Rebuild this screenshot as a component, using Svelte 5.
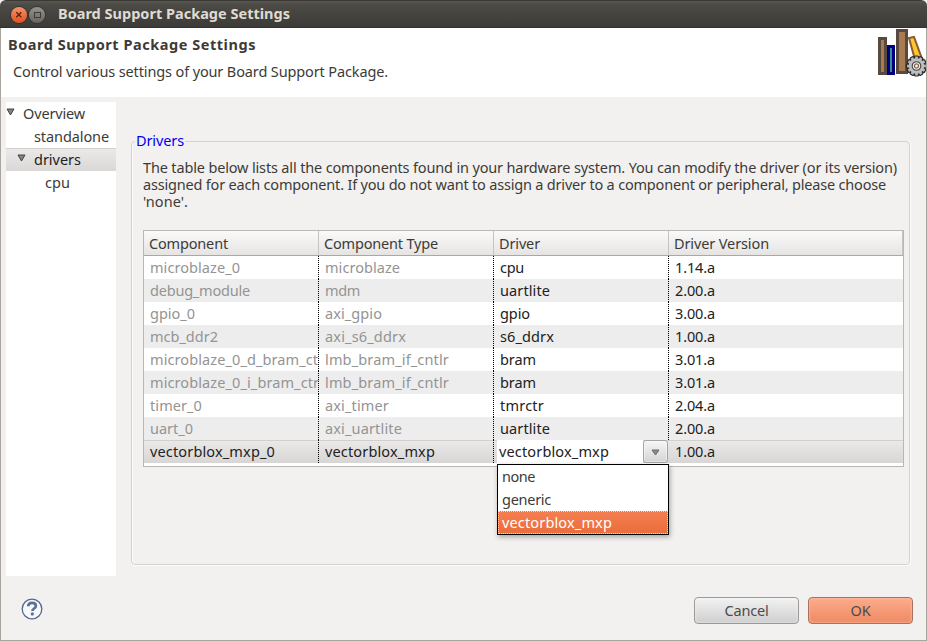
<script>
  // Spreads the letters of a label so that it takes up the given width.
  function fit(node, width) {
    const range = document.createRange();
    range.selectNodeContents(node);
    const natural = range.getBoundingClientRect().width;
    node.style.letterSpacing = `${(width - natural) / node.textContent.length}px`;
  }

  const tree = [
    { label: 'Overview', width: 62, level: 0, open: true },
    { label: 'standalone', width: 75, level: 1 },
    { label: 'drivers', width: 47, level: 1, open: true, selected: true },
    { label: 'cpu', width: 25, level: 2 }
  ];

  const description = [
    ['The table below lists all the components found in your hardware system. You can modify the driver (or its version)', 754],
    ['assigned for each component. If you do not want to assign a driver to a component or peripheral, please choose', 743],
    ["'none'.", 45]
  ];

  const columns = [
    ['Component', 79],
    ['Component Type', 114],
    ['Driver', 41],
    ['Driver Version', 95]
  ];

  const rows = [
    [['microblaze_0', 90], ['microblaze', 75], ['cpu', 24], ['1.14.a', 40]],
    [['debug_module', 100], ['mdm', 35], ['uartlite', 50], ['2.00.a', 40]],
    [['gpio_0', 45], ['axi_gpio', 57], ['gpio', 30], ['3.00.a', 40]],
    [['mcb_ddr2', 68], ['axi_s6_ddrx', 81], ['s6_ddrx', 54], ['1.00.a', 40]],
    [['microblaze_0_d_bram_ctrl', 178], ['lmb_bram_if_cntlr', 124], ['bram', 36], ['3.01.a', 40]],
    [['microblaze_0_i_bram_ctrl', 173], ['lmb_bram_if_cntlr', 124], ['bram', 36], ['3.01.a', 40]],
    [['timer_0', 52], ['axi_timer', 64], ['tmrctr', 44], ['2.04.a', 40]],
    [['uart_0', 43], ['axi_uartlite', 77], ['uartlite', 50], ['2.00.a', 40]],
    [['vectorblox_mxp_0', 125], ['vectorblox_mxp', 110], ['vectorblox_mxp', 110], ['1.00.a', 40]]
  ];

  const options = [
    ['none', 33],
    ['generic', 49],
    ['vectorblox_mxp', 110]
  ];

  const teeth = Array.from({ length: 12 }, (_, i) => i * 30);
</script>

<div class="window">
  <header class="titlebar">
    <span class="orb close">
      <svg width="16" height="16" viewBox="0 0 16 16"><path d="M5.3 5.3l5 5M10.3 5.3l-5 5" stroke="#542210" stroke-width="1.3" /></svg>
    </span>
    <span class="orb max">
      <svg width="16" height="16" viewBox="0 0 16 16"><rect x="5.5" y="5.5" width="6" height="5" fill="none" stroke="#3b3a36" /></svg>
    </span>
    <span class="title" use:fit={232}>Board Support Package Settings</span>
  </header>

  <div class="body">
    <section class="banner">
      <div class="headings">
        <h1><span use:fit={248}>Board Support Package Settings</span></h1>
        <p><span use:fit={375}>Control various settings of your Board Support Package.</span></p>
      </div>
      <svg class="books" width="48" height="49" viewBox="0 0 48 49">
        <path d="M31 10l5-1 11 30h-8z" fill="#ffc62f" stroke="#8a5d36" stroke-width="2" />
        <path d="M1.5 10.5h6v35h-6z" fill="#a87c50" stroke="#594a40" stroke-width="3" />
        <path d="M10.5 18.5h5v27h-5z" fill="#388c9f" stroke="#00007c" stroke-width="3" />
        <path d="M19.5 2.5h9v42h-9z" fill="#a87c50" stroke="#594a40" stroke-width="3" />
        <g transform="translate(38.5 38)">
          {#each teeth as angle}
            <rect x="-2" y="-10" width="4" height="5" rx="1" fill="#b9b9b9" stroke="#282828" stroke-width="1.2" transform={`rotate(${angle})`} />
          {/each}
          <circle r="7.7" fill="#bebebe" />
          <circle r="4.3" fill="#eee" stroke="#444" stroke-width="1.1" />
          <circle r="2.2" fill="#e4b878" stroke="#725c48" stroke-width="1" />
          <circle r="1" fill="#fff" />
        </g>
      </svg>
    </section>

    <main>
      <nav>
        {#each tree as node}
          <div class="node level{node.level}" class:selected={node.selected}>
            <span class="twisty">
              {#if node.open}
                <svg width="9" height="8" viewBox="0 0 9 8"><path d="M1 1h7L4.5 7z" fill="#85837f" stroke="#454440" stroke-linejoin="round" /></svg>
              {/if}
            </span>
            <span use:fit={node.width}>{node.label}</span>
          </div>
        {/each}
      </nav>

      <fieldset>
        <legend><span use:fit={48}>Drivers</span></legend>
        <div class="description">
          {#each description as [line, width]}
            <div><span use:fit={width}>{line}</span></div>
          {/each}
        </div>

        <div class="table">
          <div class="row head">
            {#each columns as [name, width]}
              <div class="cell"><span use:fit={width}>{name}</span></div>
            {/each}
          </div>
          {#each rows as cells, r}
            <div class="row item" class:current={r === rows.length - 1}>
              {#each cells as [value, width], c}
                {#if r === rows.length - 1 && c === 2}
                  <div class="cell editor">
                    <div class="entry"><span use:fit={width}>{value}</span></div>
                    <button class="arrow" aria-label="Choose driver">
                      <svg width="9" height="7" viewBox="0 0 9 7"><path d="M1 1h7L4.5 6z" fill="#8a8a8a" stroke="#6a6a6a" stroke-linejoin="round" /></svg>
                    </button>
                    <div class="popup">
                      {#each options as [option, optionWidth]}
                        <div class="option" class:active={option === value}><span use:fit={optionWidth}>{option}</span></div>
                      {/each}
                    </div>
                  </div>
                {:else}
                  <div class="cell" class:muted={c < 2 && r < rows.length - 1}><span use:fit={width}>{value}</span></div>
                {/if}
              {/each}
            </div>
          {/each}
        </div>
      </fieldset>
    </main>

    <footer>
      <svg class="help" width="22" height="22" viewBox="0 0 22 22">
        <circle cx="11" cy="11" r="9.8" fill="#f7f8fa" stroke="#50688e" stroke-width="1.3" />
        <path d="M7.2 8.3c.1-2.4 1.6-3.5 3.8-3.5 2.3 0 3.9 1.2 3.9 3.1 0 2.6-3.5 2.6-3.5 5.1" fill="none" stroke="#5c7098" stroke-width="2.7" />
        <rect x="9.8" y="14.6" width="3" height="2.8" rx=".8" fill="#5c7098" />
      </svg>
      <button class="action"><span use:fit={44}>Cancel</span></button>
      <button class="action ok"><span use:fit={20}>OK</span></button>
    </footer>
  </div>
</div>

<style>
  :global(body) {
    margin: 0;
    background: #f2f1f0;
  }
  .window {
    box-sizing: border-box;
    width: 927px;
    height: 641px;
    display: flex;
    flex-direction: column;
    overflow: hidden;
    background: #f2f1f0;
    color: #3c3b37;
    font: 14.5px/23px 'Noto Sans', 'Open Sans', sans-serif;
    white-space: nowrap;
  }
  .titlebar {
    box-sizing: border-box;
    height: 28px;
    display: flex;
    align-items: center;
    padding-left: 11px;
    background: linear-gradient(#57564f, #4b4a45 4px, #3c3b37);
    border-top: 1px solid #3a3935;
    border-bottom: 1px solid #31302c;
    border-radius: 6px 6px 0 0;
  }
  .orb {
    box-sizing: border-box;
    width: 16px;
    height: 16px;
    margin: 1px 2px 0 0;
    border-radius: 50%;
    display: flex;
    box-shadow: 0 0 0 1px #353430;
  }
  .orb svg {
    flex: none;
  }
  .close {
    background: linear-gradient(#f79168, #e3501f);
  }
  .max {
    background: linear-gradient(#95938b, #66645d);
  }
  .title {
    margin: 0 0 2px 11px;
    color: #dfdbd2;
    font-weight: 700;
    font-size: 14.5px;
  }
  .body {
    flex: 1;
    display: flex;
    flex-direction: column;
    border: 1px solid #aaa69f;
    border-top: 0;
  }
  .banner {
    height: 69px;
    display: flex;
    justify-content: space-between;
    background: #fff;
  }
  .headings {
    padding: 4px 0 0 7px;
  }
  h1 {
    margin: 0;
    font-size: 14.5px;
    line-height: 24px;
  }
  p {
    margin: 4px 0 0 5px;
    line-height: 23px;
  }
  main {
    height: 479px;
    display: flex;
    padding: 5px 16px 0 5px;
    box-sizing: border-box;
  }
  nav {
    width: 110px;
    height: 474px;
    background: #fff;
    flex: none;
  }
  .node {
    box-sizing: border-box;
    height: 23px;
    display: flex;
  }
  .node > span:last-child {
    line-height: 22px;
  }
  .level1 {
    padding-left: 11px;
  }
  .level2 {
    padding-left: 22px;
  }
  .twisty {
    width: 17px;
    display: flex;
    padding-top: 6px;
    box-sizing: border-box;
  }
  .selected {
    background: linear-gradient(#ebeae9, #dad8d6);
    box-shadow: inset 0 1px #d2d0ce;
  }
  .selected > span:last-child {
    color: #222;
  }
  fieldset {
    box-sizing: border-box;
    width: 779px;
    height: 435px;
    margin: 28px 0 0 15px;
    padding: 0 5px 0 11px;
    border: 1px solid #d5d3d1;
    border-radius: 4px;
    box-shadow: inset 1px 0 #fbfbfa, 0 1px #fcfcfb, 1px 0 #fcfcfb;
    min-width: 0;
  }
  legend {
    margin-left: -8px;
    padding: 0 1px;
    height: 22px;
    line-height: 20px;
    color: #0000f0;
  }
  .description {
    line-height: 17px;
    padding-top: 7px;
  }
  .table {
    box-sizing: border-box;
    width: 761px;
    height: 237px;
    margin-top: 20px;
    border: 1px solid #b9b6b3;
    background: #fff;
  }
  .row {
    display: grid;
    grid-template-columns: 175px 175px 175px 1fr;
  }
  .head {
    box-sizing: border-box;
    height: 25px;
    line-height: 24px;
    background: linear-gradient(#fafafa, #e6e4e3);
    border-bottom: 1px solid #aaa7a4;
  }
  .head .cell {
    padding-left: 5px;
    border-right: 1px solid #c6c4c1;
  }
  .item {
    height: 23px;
  }
  .item:nth-child(odd) {
    background: #ededed;
  }
  .item .cell {
    height: 23px;
    line-height: 22px;
    box-sizing: border-box;
    padding-left: 6px;
    overflow: hidden;
    color: #222;
    background: repeating-linear-gradient(#000 0 1px, transparent 1px 2px) right / 1px 100% no-repeat;
  }
  .item .cell:last-child {
    background: none;
  }
  .item .cell.muted {
    color: #949494;
  }
  .item.current {
    background: linear-gradient(#ebeae9, #d8d6d4);
    box-shadow: inset 0 1px #d2d0ce;
  }
  .item .cell.editor {
    position: relative;
    display: flex;
    overflow: visible;
    padding-left: 3px;
    background: none;
  }
  .entry {
    width: 144px;
    padding-left: 2px;
    background: #fff;
  }
  .arrow {
    flex: none;
    width: 25px;
    height: 23px;
    padding: 2px 0 0;
    display: flex;
    align-items: center;
    justify-content: center;
    border: 1px solid #a7a5a3;
    border-radius: 3px;
    background: linear-gradient(#f6f6f6, #d4d4d4);
    box-shadow: inset 0 0 0 1px #ffffff70;
  }
  .popup {
    position: absolute;
    left: 3px;
    top: 24px;
    box-sizing: border-box;
    width: 172px;
    height: 71px;
    border: 1px solid #000;
    background: #fff;
    box-shadow: 1px 2px 5px #0005;
  }
  .option {
    box-sizing: border-box;
    height: 23px;
    line-height: 22px;
    padding-left: 4px;
    color: #3c3b37;
  }
  .option.active {
    padding-left: 3px;
    color: #fff;
    background: linear-gradient(#f47e50, #eb6d3c);
    border: 1px dotted #ffd9c8;
    line-height: 20px;
  }
  footer {
    flex: 1;
    display: flex;
    align-items: flex-start;
    padding: 21px 13px 0 20px;
  }
  .help {
    margin-top: 1px;
    margin-right: auto;
  }
  .action {
    box-sizing: border-box;
    width: 105px;
    height: 27px;
    margin-left: 9px;
    padding: 0;
    font: inherit;
    line-height: 25px;
    color: #4c4c4c;
    border: 1px solid #9c9a98;
    border-radius: 4px;
    background: linear-gradient(#f2f2f2, #cfcfcf);
    box-shadow: inset 0 0 3px #fff9;
  }
  .ok {
    border-color: #a8735d;
    background: linear-gradient(#fcab8b, #ee8a63);
    box-shadow: inset 0 0 3px #ffc5aa;
  }
</style>
